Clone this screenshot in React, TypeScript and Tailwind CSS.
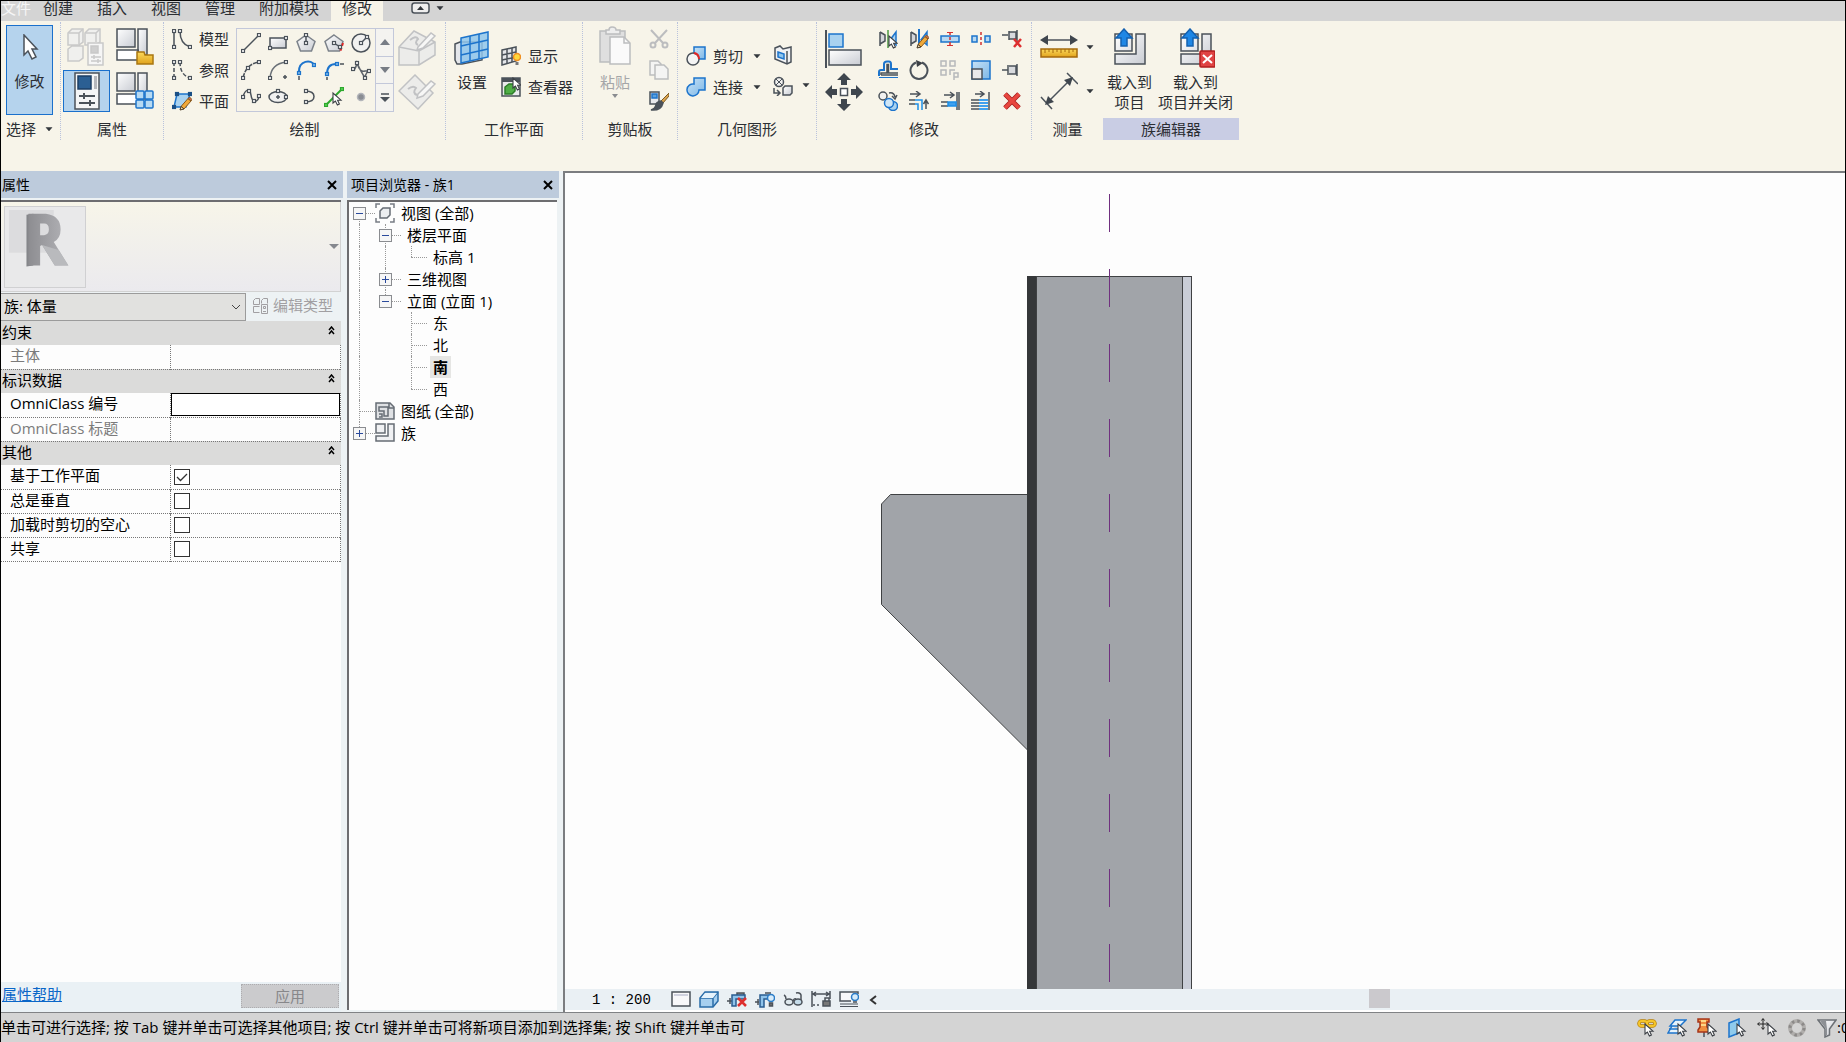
import type { ReactNode } from "react";

interface IconProps {
    w?: number;
    h?: number;
    children: ReactNode;
}

function Icon({ w = 20, h = 20, children }: IconProps) {
    return <svg width={w} height={h} viewBox={`0 0 ${w} ${h}`} fill="none" stroke="#4b525a" strokeWidth="1.5" className="block shrink-0" aria-hidden="true">{children}</svg>
}

function Defs() {
    return <svg width="0" height="0" className="absolute" aria-hidden="true">
        <defs>
            <linearGradient id="gray" x1="0" y1="0" x2="1" y2="1"><stop offset="0" stopColor="#fff" /><stop offset="1" stopColor="#c9ccd3" /></linearGradient>
            <linearGradient id="blue" x1="0" y1="0" x2="1" y2="1"><stop offset="0" stopColor="#c8e2f6" /><stop offset="1" stopColor="#7db7e6" /></linearGradient>
            <linearGradient id="gold" x1="0" y1="0" x2="0" y2="1"><stop offset="0" stopColor="#fbd95c" /><stop offset="1" stopColor="#e0a21c" /></linearGradient>
            <linearGradient id="metal" x1="0" y1="0" x2="1" y2="0"><stop offset="0" stopColor="#8d8d91" /><stop offset="1" stopColor="#b4b4b8" /></linearGradient>
        </defs>
    </svg>
}

/* small square handles used by the sketch tools */
function Dots({ at, color = "#4b525a", fill = "#fff" }: { at: [number, number][]; color?: string; fill?: string }) {
    return <>{at.map(([x, y]) => <rect key={x + "-" + y} x={x - 1.5} y={y - 1.5} width="3" height="3" fill={fill} stroke={color} strokeWidth="1.2" />)}</>
}

function Pointer({ x, y }: { x: number; y: number }) {
    return <path transform={`translate(${x} ${y})`} d="M0 0V10L2.4 8L4.4 12L6.4 11L4.6 7.2H8Z" fill="#fff" stroke="#3c4046" strokeWidth="1.1" />
}

function Pencil() {
    return <g strokeWidth="1">
        <path d="M9 15.500L16 7.500L19 10L12 18Z" fill="#f0a93a" stroke="#8a5a1c" />
        <path d="M16 7.500L17.500 6L20 8.500L19 10Z" fill="#c96a55" stroke="#8a5a1c" />
        <path d="M9 15.500L8 19L12 18Z" fill="#f6dfb0" stroke="#4b3a22" />
    </g>
}

function Down({ className = "" }: { className?: string }) {
    return <svg width="8" height="5" viewBox="0 0 8 5" className={className} aria-hidden="true"><path d="M1 0.500H7L4 4Z" fill="#33373c" stroke="#33373c" strokeWidth="0.500" /></svg>
}

const drawTools: { name: string; icon: ReactNode }[] = [
    { name: "直线", icon: <><path d="M2 18L18 2" /><Dots at={[[2, 18], [18, 2]]} /></> },
    { name: "矩形", icon: <><rect x="2" y="5" width="16" height="10" fill="url(#gray)" /><Dots at={[[2, 15], [18, 5]]} /></> },
    { name: "内接多边形", icon: <><path d="M10 2L19 8.500L15.500 18H4.500L1 8.500Z" fill="url(#gray)" stroke="#7c828a" /><path d="M10 2V10" /><Dots at={[[10, 2], [10, 10]]} /></> },
    { name: "外接多边形", icon: <><path d="M10 2L19 8.500L15.500 18H4.500L1 8.500Z" fill="url(#gray)" stroke="#7c828a" /><path d="M10 10L16 14" /><path d="M19 10L16 19" stroke="#e02626" strokeDasharray="3 2" strokeWidth="2" /><Dots at={[[10, 10], [16, 14]]} /></> },
    { name: "圆形", icon: <><circle cx="10" cy="10" r="9" fill="#f1f1f0" /><path d="M10 10L16 4" /><Dots at={[[10, 10], [16, 4]]} /></> },
    { name: "起点-终点-半径弧", icon: <><path d="M2 18Q5 4 18 2" strokeDasharray="5 1" /><Dots at={[[2, 18], [7, 8], [18, 2]]} /></> },
    { name: "圆心-端点弧", icon: <><path d="M2 18Q3 4 18 2" stroke="#6b7178" /><Dots at={[[2, 18], [18, 2]]} /><path d="M17 15V19M15 17H19" /></> },
    { name: "相切-端点弧", icon: <><path d="M3 13C2 0 16 -1 18 5" stroke="#1d74cc" strokeWidth="2" /><Dots at={[[3, 13], [18, 5]]} color="#1d74cc" fill="#7db7e6" /><path d="M3 16V20" /></> },
    { name: "圆角弧", icon: <><path d="M3 14C3 7 6 4 12 4" stroke="#1d74cc" strokeWidth="2" /><Dots at={[[3, 14], [13, 4]]} color="#1d74cc" fill="#7db7e6" /><path d="M16 4H20M3 17V20" /></> },
    { name: "样条曲线", icon: <><path d="M1 9Q4 12 6 3Q9 13 14 11L19 11M14 18Q15 11 19 11M6 3Q9 10 14 18" stroke="#5e646c" /><Dots at={[[2, 9], [6, 3], [14, 18], [18, 11]]} /></> },
    { name: "样条", icon: <><path d="M2 10C4 2 9 1 10 8C11 16 17 16 18 9" /><Dots at={[[2, 10], [8, 4], [13, 14], [18, 9]]} /></> },
    { name: "椭圆", icon: <><ellipse cx="10" cy="10" rx="9" ry="5.500" fill="#f1f1f0" /><Dots at={[[10, 4], [18, 10]]} /><path d="M10 8V12M8 10H12" /></> },
    { name: "半椭圆", icon: <><path d="M9 4Q18 4 18 9.500Q18 15 9 15" /><Dots at={[[10, 4], [10, 15]]} /></> },
    { name: "拾取线", icon: <><path d="M1 19L19 1" stroke="#2da82d" strokeWidth="2" /><Dots at={[[2, 18], [18, 2]]} color="#2da82d" fill="#58d058" /><Pointer x={9} y={6} /></> },
    { name: "点图元", icon: <><circle cx="10" cy="10" r="3.500" fill="#8a8d93" stroke="#b3b5ba" /></> },
];

const modifyTools: { name: string; icon: ReactNode }[] = [
    { name: "镜像-拾取轴", icon: <><path d="M2 3V17M2 3L7 6V12L2 15" fill="#d4d6da" /><path d="M10 1V19" stroke="#4d9b3f" /><path d="M18 3V16L12 11Z" fill="#a9d2f0" stroke="#1d74cc" /><Pointer x={11} y={7} /></> },
    { name: "镜像-绘制轴", icon: <><path d="M2 3V17M2 3L7 6V12L2 15" fill="#d4d6da" /><path d="M10 0V19" stroke="#1d74cc" strokeWidth="2" /><path d="M18 3V16L12 11Z" fill="#a9d2f0" stroke="#1d74cc" /><Pencil /></> },
    { name: "拆分图元", icon: <><path d="M1 7H19V13H1Z" fill="#b9d9f2" stroke="#1d74cc" /><path d="M10 3V17" stroke="#d43030" strokeDasharray="3 2" /><path d="M7 3.500H13M7 16.500H13" stroke="#d43030" strokeWidth="1" /></> },
    { name: "用间隙拆分", icon: <><rect x="1" y="7" width="5" height="6" fill="#b9d9f2" stroke="#1d74cc" /><rect x="14" y="7" width="5" height="6" fill="#b9d9f2" stroke="#1d74cc" /><path d="M10 3V17" stroke="#d43030" strokeDasharray="3 2" /></> },
    { name: "解锁", icon: <><path d="M0 6H6M7 2V11M7 3H14V10H7M15 1V12" fill="#d8dade" /><path d="M12 10L19 18M19 10L12 18" stroke="#dd2f2f" strokeWidth="2.500" /></> },
    { name: "偏移", icon: <><path d="M1 16V12Q1 10 3 10H6V4Q6 1.500 9 1.500H11Q13 1.500 13 4V9H20" stroke="#1d74cc" strokeWidth="2" /><path d="M1 17.500H20" stroke="#1d74cc" strokeWidth="1" /><path d="M3 15V13H9V4.500H10.500V13H20M3 15H20" /></> },
    { name: "旋转", icon: <><path d="M7 2.500A8.500 8.500 0 1 0 13 2.500" strokeWidth="2" /><path d="M7 0L14 3L8 7Z" fill="#3c4046" stroke="none" /></> },
    { name: "阵列", icon: <g stroke="#b7b8bb"><rect x="1" y="1" width="5" height="5" /><rect x="10" y="1" width="5" height="5" /><rect x="1" y="10" width="5" height="5" /><path d="M10 15V10H15M14 20V13H18V17H14" /></g> },
    { name: "缩放", icon: <><rect x="1" y="1" width="18" height="18" fill="url(#blue)" stroke="#1d74cc" /><rect x="1" y="9" width="10" height="10" fill="#e8e9ec" /></> },
    { name: "锁定", icon: <><path d="M0 10H6M6 5V15M7 6H14V14H7M15 4V16" fill="#d8dade" /></> },
    { name: "复制", icon: <><circle cx="5" cy="5" r="4" fill="#f1f1f0" /><path d="M11 2Q16 1 17 6M14 5L17 8L19 4" /><circle cx="15" cy="15" r="4.500" fill="#a9d2f0" stroke="#1d74cc" /><circle cx="11" cy="12" r="4.500" fill="#cfe6f7" stroke="#1d74cc" /></> },
    { name: "修剪/延伸为角", icon: <><path d="M1 3H10M7 0L11 3L7 6" /><path d="M0 9H6M0 13H6" /><path d="M6 9H13V19M6 13H9V19" stroke="#1d8fe8" strokeWidth="1.500" /><path d="M17 18V10M14.500 13L17 9L19.500 13" /></> },
    { name: "修剪/延伸单个图元", icon: <><path d="M4 4H13M10 1L14 4L10 7M17 1V19M19 1V19" /><path d="M1 11H8M1 15H8" /><rect x="8" y="11" width="8" height="4" fill="#3fa0ee" stroke="#1d8fe8" /></> },
    { name: "修剪/延伸多个图元", icon: <><path d="M4 3H12M9 0L13 3L9 6M18 1V19M0 9H8M0 12H8M0 15H8M0 18H8" /><path d="M8 9H17M8 12H17M8 15H17M8 18H17" stroke="#3fa0ee" strokeWidth="2" /></> },
    { name: "删除", icon: <><path d="M3 3L17 17M17 3L3 17" stroke="#a51e1e" strokeWidth="5" /><path d="M3 3L17 17M17 3L3 17" stroke="#e8473f" strokeWidth="3.500" /></> },
];

const viewControls: { name: string; icon: ReactNode }[] = [
    { name: "详细程度", icon: <><rect x="1" y="2" width="18" height="14" fill="#f8f8fa" /><path d="M3 5H17" stroke="#c3c6d6" /></> },
    { name: "视觉样式", icon: <><path d="M1 8L6 2H19V11L14 17H1Z" fill="#a6cfef" stroke="#2a6ca8" /><path d="M1 8H14V17M14 8L19 2" stroke="#2a6ca8" /><path d="M2 8L6 3H18L14 8Z" fill="#e6f3fc" stroke="none" /></> },
    { name: "关闭裁剪", icon: <><path d="M0 11H5M3 8V14M10 3H17V6H10Z" fill="#999" /><path d="M5 16V5H18V9H9V16Z" fill="#8fc3ea" stroke="#2a5c90" /><path d="M11 8L19 16M19 8L11 16" stroke="#dd2f2f" strokeWidth="2.500" /></> },
    { name: "显示裁剪区域", icon: <><path d="M0 12H4M3 9V15M10 3H16" /><path d="M5 17V5H14V9H9V17Z" fill="#8fc3ea" stroke="#2a5c90" /><circle cx="16" cy="8" r="3.500" fill="#d6ebfa" stroke="#2a7cc8" /><path d="M14.500 13H17.500V16H14.500Z" fill="#777" /></> },
    { name: "临时隐藏/隔离", icon: <><path d="M1 5Q3 6 3 9M10 11Q11 8 13 9M18 10V5Q17 2 13 3" /><ellipse cx="6" cy="12" rx="4" ry="3" fill="#dfe9ee" /><ellipse cx="15" cy="12" rx="4" ry="3" fill="#c5dcea" /></> },
    { name: "显示隐藏的图元", icon: <><path d="M1 1V17M19 1V9M2 4H18M5 2L2 4L5 6M15 2L18 4L15 6" /><path d="M2 15H10" strokeDasharray="2 2" /><rect x="12" y="11" width="7" height="5" fill="#777" /><path d="M14 11V8H18V11" /></> },
    { name: "临时视图属性", icon: <><path d="M19 4V2H1V11H12" fill="#f8f8fa" /><path d="M1 14H19M1 16.500H19" strokeWidth="1" /><circle cx="16" cy="7" r="3.500" fill="#d6ebfa" stroke="#2a7cc8" /><path d="M14 12H18" /></> },
];

const selectToggles: { name: string; icon: ReactNode }[] = [
    { name: "选择链接", icon: <><rect x="2" y="3" width="8" height="5" rx="2.500" stroke="#b67f06" strokeWidth="3.500" /><rect x="10" y="3" width="8" height="5" rx="2.500" stroke="#b67f06" strokeWidth="3.500" /><rect x="2" y="3" width="8" height="5" rx="2.500" stroke="#f5c52a" strokeWidth="2" /><rect x="10" y="3" width="8" height="5" rx="2.500" stroke="#f5c52a" strokeWidth="2" /><Pointer x={8} y={6} /></> },
    { name: "选择基线图元", icon: <><path d="M8 2H19L13 8H3ZM5 8L1 15H15" fill="#e6f3fc" stroke="#1d74cc" /><path d="M2 11H16" stroke="#1d74cc" /><Pointer x={11} y={6} /></> },
    { name: "选择锁定图元", icon: <><path d="M7 13V19" /><path d="M1 1H12V4H10V9L13 12V14H1V12L3 9V4H1Z" fill="#f09040" stroke="#a53418" /><path d="M4 3H9M4 7H9" stroke="#fff0a0" /><Pointer x={11} y={6} /></> },
    { name: "按面选择图元", icon: <><path d="M2 5L12 1V15L2 19Z" fill="#8fcbed" stroke="#1d74cc" /><Pointer x={10} y={6} /></> },
    { name: "选择时拖拽图元", icon: <><path d="M6 1V11M1 6H11M4.500 2.500L6 0.500L7.500 2.500M4.500 9.500L6 11.500L7.500 9.500M2.500 4.500L0.500 6L2.500 7.500M9.500 4.500L11.500 6L9.500 7.500" stroke="#222" strokeWidth="1" /><Pointer x={11} y={6} /></> },
    { name: "后台进程", icon: <><circle cx="10" cy="10" r="7" stroke="#b0aeac" strokeWidth="4" /><circle cx="10" cy="10" r="7" stroke="#8c8a89" strokeWidth="3" strokeDasharray="2.500 3" /></> },
    { name: "过滤器", icon: <><path d="M1 2H19L12.500 11V17L8 19V11Z" fill="url(#gray)" stroke="#6c7075" /><path d="M3 3H9L10 11V17H9V11Z" fill="#8d9095" stroke="none" /></> },
];

function IconButton({ name, children }: { name: string; children: ReactNode }) {
    return <button type="button" aria-label={name} className="flex items-center justify-center">{children}</button>
}

function Panel({ title, last, className = "", children }: { title: ReactNode; last?: boolean; className?: string; children: ReactNode }) {
    return <section className={"flex flex-col " + (last ? "" : "border-r border-dotted border-[#b9c2dc] ") + className}>
        <div className="flex h-24 items-center">{children}</div>
        <div className={"flex h-[22px] items-center justify-center " + (last ? "bg-[#c9cde4]" : "")}>{title}</div>
    </section>
}

/* stack of blocks, the base of all family icons */
function Blocks() {
    return <g fill="url(#gray)"><path d="M1 1H19V19H1Z" /><path d="M22 1H31V27H22Z" /><path d="M1 22H22V32H1Z" fill="#fff" /></g>
}

function LoadIcon({ close }: { close?: boolean }) {
    return <Icon w={38} h={40}>
        <path d="M4 6H21V23H4ZM25 6H34V36H4V26H25Z" fill="url(#gray)" />
        <path d="M13 1L21 10H16V18H10V10H5Z" fill="#1f87e5" stroke="#1461b0" />
        {close && <><rect x="23" y="23" width="15" height="16" rx="1" fill="#e04343" stroke="#b01f1f" /><path d="M26 27L35 35M35 27L26 35" stroke="#fff" strokeWidth="2" /></>}
    </Icon>
}

function Ribbon() {
    return <div className="flex h-[150px] items-start bg-[#f7f4e9] pt-px whitespace-nowrap">
        <Panel className="w-[60px]" title={<button type="button" className="flex w-full items-center gap-[9px] pl-[5px]">选择<Down /></button>}>
            <button type="button" className="ml-[5px] flex h-[90px] w-[47px] flex-col items-center border border-[#1a70cc] bg-[#b5d3ed] pt-2">
                <Icon w={18} h={26}><path d="M3 1V21L7 17L11 25L15 23L11 15H16Z" fill="#fff" /></Icon>
                <span className="mt-2.5">修改</span>
            </button>
        </Panel>
        <Panel className="w-[103px]" title="属性">
            <div className="grid flex-1 grid-cols-2 gap-y-1 pr-1">
                <IconButton name="族类别和族参数">
                    <Icon w={38} h={38}>
                        <g stroke="#c9c9c9" fill="#f0f0ee"><path d="M1 5L5 1H16V14L12 17H1ZM18 5L22 1H33V14L29 17H18ZM1 21L5 18H16V30L12 33H1Z" /><path d="M1 5H12V17M12 5L16 1M18 5H29V14M29 5L33 1" /><path d="M21 15H36V37H21Z" fill="#f6f6f6" /><path d="M24 18H31V25H24Z" fill="#cfcfcf" /><path d="M24 29H34M24 33H34M27 27V31M31 31V35" /></g>
                    </Icon>
                </IconButton>
                <IconButton name="族类型">
                    <Icon w={38} h={38}><Blocks /><path d="M21 25V36H37V27H29L28 24H21Z" fill="url(#gold)" stroke="#a97712" /></Icon>
                </IconButton>
                <button type="button" aria-label="属性" className="ml-0.5 flex h-[42px] w-[47px] items-center justify-center border border-[#1a70cc] bg-[#b5d3ed]">
                    <Icon w={28} h={38}><path d="M2 1H26V37H2Z" fill="#f4f5f6" /><path d="M5 4H18V17H5Z" fill="#2b5f93" stroke="#1c3f66" /><path d="M21 4H24V17H21Z" fill="#b5b7bc" stroke="none" /><path d="M6 24H22M6 31H22M11 21V27M17 28V34" strokeWidth="2" /></Icon>
                </button>
                <IconButton name="类型属性">
                    <Icon w={38} h={38}><Blocks /><g fill="#b7daf3" stroke="#1d74cc"><rect x="20" y="19" width="8" height="8" rx="1" /><rect x="29" y="19" width="8" height="8" rx="1" /><rect x="20" y="28" width="8" height="8" rx="1" /><rect x="29" y="28" width="8" height="8" rx="1" /></g></Icon>
                </IconButton>
            </div>
        </Panel>
        <Panel className="w-[282px]" title="绘制">
            <div className="ml-2 flex flex-col">
                <button type="button" className="flex h-[31px] items-center gap-[7px]"><Icon><path d="M2 2V18M8 2Q8 15 18 18" /><Dots at={[[2, 2], [2, 18], [8, 2], [18, 18]]} /></Icon>模型</button>
                <button type="button" className="flex h-[31px] items-center gap-[7px]"><Icon><path d="M2 2V18M8 2Q8 15 18 18" strokeDasharray="4 2" /><Dots at={[[2, 2], [2, 18], [8, 2], [18, 18]]} /></Icon>参照</button>
                <button type="button" className="flex h-[31px] items-center gap-[7px]"><Icon><path d="M5 3H18L14 16H2Z" fill="#a9d2f0" stroke="#1d74cc" /><Dots at={[[5, 3], [18, 3], [2, 16]]} color="#1b4f85" fill="#1b4f85" /><Pencil /></Icon>平面</button>
            </div>
            <div className="ml-[7px] flex h-[84px] w-[158px] border border-[#c3c8da]">
                <div className="grid flex-1 grid-cols-5">
                    {drawTools.map((t) => <IconButton key={t.name} name={t.name}><Icon>{t.icon}</Icon></IconButton>)}
                </div>
                <div className="flex w-[18px] flex-col divide-y divide-[#c3c8da] border-l border-[#c3c8da] bg-[#f4f3f0]">
                    <button type="button" aria-label="上一行" className="flex flex-1 items-center justify-center"><Icon w={10} h={6}><path d="M0 6L5 0L10 6Z" fill="#777c85" stroke="none" /></Icon></button>
                    <button type="button" aria-label="下一行" className="flex flex-1 items-center justify-center"><Icon w={10} h={6}><path d="M0 0L5 6L10 0Z" fill="#777c85" stroke="none" /></Icon></button>
                    <button type="button" aria-label="更多" className="flex flex-1 items-center justify-center"><Icon w={10} h={10}><path d="M1 1H9" /><path d="M0 4L5 9L10 4Z" fill="#4b525a" stroke="none" /></Icon></button>
                </div>
            </div>
            <div className="ml-1 flex flex-col gap-2">
                <IconButton name="在面上绘制"><Icon w={38} h={36}><g stroke="#c1c2c4" fill="#ececea"><path d="M1 17L16 1L37 12V25L21 35H1Z" /><path d="M1 17L21 21L37 12M21 21V35" /><path d="M12 10Q18 5 20 9Q16 13 20 15" fill="none" strokeWidth="2" /><path d="M20 17L33 3L37 6L25 18L19 20Z" fill="#f7f7f6" /></g></Icon></IconButton>
                <IconButton name="在工作平面上绘制"><Icon w={38} h={36}><g stroke="#c1c2c4" fill="#ececea"><path d="M1 17L17 1L35 19L20 35Z" /><path d="M10 15Q15 11 18 14Q14 19 19 21" fill="none" strokeWidth="2" /><path d="M20 20L33 7L37 10L25 22L19 24Z" fill="#f7f7f6" /></g></Icon></IconButton>
            </div>
        </Panel>
        <Panel className="w-[137px]" title="工作平面">
            <button type="button" className="ml-2 flex flex-col items-center self-start pt-2 leading-5"><Icon w={36} h={36}><path d="M1 14L6 12H28V30L8 34H3L1 30Z" fill="#e4e6ea" /><path d="M7 8L34 2V27L7 33Z" fill="#8fc5ec" fillOpacity="0.850" stroke="#1d74cc" /><path d="M16 6V31M25 4V29M7 16L34 10M7 25L34 19" stroke="#1d74cc" /></Icon><span className="mt-1.5">设置</span></button>
            <div className="ml-[11px] flex flex-col pt-[3px]">
                <button type="button" className="flex h-[31px] items-center gap-[7px]"><Icon><path d="M1 4L15 1V15L1 19Z" fill="#e4e6ea" /><path d="M6 3V18M11 2V16M1 9L15 6M1 14L15 11" /><circle cx="16" cy="11" r="3.500" fill="#ffd83c" stroke="#f09022" /><path d="M14.500 16H17.500V19H14.500Z" fill="#777" stroke="none" /></Icon>显示</button>
                <button type="button" className="flex h-[31px] items-center gap-[7px]"><Icon><rect x="1" y="1" width="18" height="18" fill="#e9eaec" /><path d="M1 3H19" strokeWidth="4" /><path d="M4 10L8 7H14V14L11 17H4Z" fill="#4fae45" stroke="#2c7d28" /><Pointer x={12} y={1} /></Icon>查看器</button>
            </div>
        </Panel>
        <Panel className="w-[95px]" title="剪贴板">
            <button type="button" className="ml-4 flex flex-col items-center self-start pt-1 leading-5 text-[#a5a6a8]">
                <Icon w={32} h={40}><g stroke="#bcbdbf"><path d="M1 5H26V36H1Z" fill="#dfdfdf" /><path d="M7 8V4H10Q10 1 13 1Q17 1 17 4H21V8Z" fill="#eee" /><path d="M11 11H25L31 17V38H11Z" fill="#fafafa" /><path d="M25 11V17H31" /></g></Icon>
                <span className="mt-1.5">粘贴</span>
                <svg width="8" height="5" viewBox="0 0 8 5" className="mt-0.5"><path d="M1 0H7L4 4Z" fill="#8a8c90" /></svg>
            </button>
            <div className="ml-[18px] flex flex-col">
                <span className="flex h-[31px] items-center"><IconButton name="剪切"><Icon><g stroke="#bcbdbf" strokeWidth="2"><path d="M2 1L14 14M18 1L6 14" /><circle cx="4" cy="16" r="2.500" /><circle cx="16" cy="16" r="2.500" /></g></Icon></IconButton></span>
                <span className="flex h-[31px] items-center"><IconButton name="复制到剪贴板"><Icon><g stroke="#bcbdbf" fill="#f4f4f3"><path d="M1 1H9L12 4V15H1Z" /><path d="M6 5H15L19 9V19H6Z" /></g></Icon></IconButton></span>
                <span className="flex h-[31px] items-center"><IconButton name="匹配类型属性"><Icon><rect x="1" y="1" width="9" height="12" fill="#e8e9ec" /><rect x="3" y="3" width="5" height="4" fill="#5b9fdc" stroke="#1d74cc" /><path d="M20 2L12 10L14 12L20 5Z" fill="#dca24c" stroke="#7a5a22" strokeWidth="1" /><path d="M12 10Q7 11 7 14Q6 18 2 19Q12 20 14 12Z" fill="#4b525a" /></Icon></IconButton></span>
            </div>
        </Panel>
        <Panel className="w-[139px]" title="几何图形">
            <div className="ml-2 flex flex-col pt-[3px]">
                <button type="button" className="flex h-[31px] items-center gap-[7px]"><Icon><rect x="8" y="1" width="11" height="12" fill="url(#blue)" stroke="#1d74cc" /><circle cx="7" cy="13" r="6" fill="#f4f4f4" /><path d="M8 7Q13 8 13 13" stroke="#e02626" strokeWidth="2" /></Icon>剪切<Down className="ml-[3px]" /></button>
                <button type="button" className="flex h-[31px] items-center gap-[7px]"><Icon><path d="M8 1H19V13H13A6 6 0 1 1 8 7Z" fill="url(#blue)" stroke="#1d74cc" /></Icon>连接<Down className="ml-[3px]" /></button>
            </div>
            <div className="ml-3 flex flex-col">
                <span className="flex h-[31px] items-center"><IconButton name="洞口"><Icon><path d="M2 3L7 1L10 4L18 2V17L14 19L2 14Z" fill="#f0f1f3" /><path d="M5 7L11 9V14L5 12Z" fill="#8fc5ec" stroke="#1d74cc" /><path d="M14 6V19" /></Icon></IconButton></span>
                <button type="button" aria-label="连接端切割" className="flex h-[31px] items-center gap-[9px]"><Icon><circle cx="6" cy="6" r="4.500" fill="#f1f1f0" /><path d="M3 3L9 9M9 3L3 9" strokeWidth="1" /><path d="M1 12V17H6M4 14L7 17L4 20" /><path d="M10 12L12 10H19V17L17 19H10Z" fill="url(#gray)" /></Icon><Down /></button>
            </div>
        </Panel>
        <Panel className="w-[215px]" title="修改">
            <div className="ml-2 flex flex-col gap-1">
                <IconButton name="对齐"><Icon w={38} h={40}><path d="M1 1V39" strokeWidth="2" /><rect x="4" y="5" width="14" height="13" fill="#a9d2f0" stroke="#1d74cc" /><rect x="4" y="21" width="32" height="15" fill="url(#gray)" /></Icon></IconButton>
                <IconButton name="移动"><Icon w={38} h={38}><path d="M19 0L26 7H22V12H16V7H12ZM19 38L26 31H22V26H16V31H12ZM0 19L7 12V16H12V22H7V26ZM38 19L31 12V16H26V22H31V26Z" fill="#3f464e" stroke="none" /><rect x="15.500" y="15.500" width="7" height="7" fill="#fff" /></Icon></IconButton>
            </div>
            <div className="ml-[9px] mr-1 grid flex-1 grid-cols-5">
                {modifyTools.map((t) => <span key={t.name} className="flex h-[31px] items-center justify-center"><IconButton name={t.name}><Icon>{t.icon}</Icon></IconButton></span>)}
            </div>
        </Panel>
        <div className="flex flex-1">
            <Panel className="w-[71px] border-r-0" title="测量">
                <div className="ml-2 flex flex-col gap-3 pt-1">
                    <button type="button" aria-label="测量距离" className="flex items-center gap-2"><Icon w={38} h={26}><path d="M3 6H35" /><path d="M0 6L8 1V11ZM38 6L30 1V11Z" fill="#3f464e" stroke="none" /><rect x="1" y="15" width="36" height="8" fill="url(#gold)" stroke="#a4690d" /><path d="M5 15V19M9 15V18M13 15V19M17 15V18M21 15V19M25 15V18M29 15V19M33 15V18" stroke="#a4690d" strokeWidth="1" /></Icon><Down /></button>
                    <button type="button" aria-label="尺寸标注" className="flex items-center gap-2"><Icon w={38} h={38}><path d="M7 31L31 7M1 25L12 37M27 1L38 12" /><path d="M5 33L8 24L14 30ZM33 5L24 8L30 14Z" fill="#3f464e" stroke="none" /></Icon><Down /></button>
                </div>
            </Panel>
            <Panel last className="w-[136px]" title="族编辑器">
                <button type="button" className="ml-1 flex flex-col items-center gap-1 leading-5"><LoadIcon /><span>载入到<br />项目</span></button>
                <button type="button" className="ml-1.5 flex flex-col items-center gap-1 leading-5"><LoadIcon close /><span>载入到<br />项目并关闭</span></button>
            </Panel>
        </div>
    </div>
}

function TitleBar({ title }: { title: string }) {
    return <div className="flex h-[27px] items-center justify-between bg-[#bdcbdc] pr-1.5 pl-px text-sm">
        <h2>{title}</h2>
        <button type="button" aria-label="关闭"><Icon w={10} h={10}><path d="M1 1L9 9M9 1L1 9" stroke="#000" strokeWidth="2" /></Icon></button>
    </div>
}

interface Field {
    id: string;
    label: string;
    kind: "none" | "text" | "check";
    checked?: boolean;
}

const groups: { name: string; fields: Field[] }[] = [
    { name: "约束", fields: [{ id: "host", label: "主体", kind: "none" }] },
    { name: "标识数据", fields: [{ id: "omni-no", label: "OmniClass 编号", kind: "text" }, { id: "omni-title", label: "OmniClass 标题", kind: "none" }] },
    {
        name: "其他", fields: [
            { id: "plane", label: "基于工作平面", kind: "check", checked: true },
            { id: "vertical", label: "总是垂直", kind: "check" },
            { id: "void", label: "加载时剪切的空心", kind: "check" },
            { id: "shared", label: "共享", kind: "check" },
        ]
    },
];

function FieldInput({ field }: { field: Field }) {
    if (field.kind === "text") {
        return <input id={field.id} className="block h-[23px] w-full border border-black bg-white px-1 outline-none" />
    }
    if (field.kind === "check") {
        return <div className="relative ml-[3px] size-4">
            <input id={field.id} type="checkbox" defaultChecked={field.checked} className="peer block size-4 appearance-none border border-[#333] bg-white" />
            <svg viewBox="0 0 16 16" className="pointer-events-none absolute inset-0 hidden peer-checked:block"><path d="M3 8L6.500 11.500L13 5" fill="none" stroke="#333" strokeWidth="1.300" /></svg>
        </div>
    }
    return null;
}

function PropertyTable() {
    return <table className="w-full table-fixed border-collapse">
        <colgroup><col className="w-1/2" /><col className="w-1/2" /></colgroup>
        {groups.map((g) => <tbody key={g.name}>
            <tr className="h-6 bg-[#dbdbda]">
                <th colSpan={2} className="p-0 pr-1.5 pb-0.5 pl-px text-left font-normal">
                    <div className="flex items-center justify-between leading-5">{g.name}
                        <button type="button" aria-label={"折叠" + g.name} className="-mt-1"><Icon w={7} h={9}><path d="M1 4L3.500 1L6 4M1 8L3.500 5L6 8" stroke="#000" /></Icon></button>
                    </div>
                </th>
            </tr>
            {g.fields.map((f) => <tr key={f.id} className="h-6 border-b border-dotted border-[#777]">
                <td className={"border-r border-dotted border-[#777] p-0 pb-[3px] pl-[9px] leading-5 " + (f.kind === "none" ? "text-[#7b7b7b]" : "")}>
                    {f.kind === "none" ? f.label : <label htmlFor={f.id}>{f.label}</label>}
                </td>
                <td className="border-r border-dotted border-[#777] p-0"><FieldInput field={f} /></td>
            </tr>)}
        </tbody>)}
    </table>
}

function Properties() {
    return <aside className="flex w-[342px] shrink-0 flex-col bg-[#edf2f4]">
        <TitleBar title="属性" />
        <div className="mt-0.5 mr-0.5 flex flex-1 flex-col border-t-2 border-[#6d6d70] bg-[#fdfdfd]">
            <div className="flex h-[90px] items-center justify-between border-r border-b border-[#d2d2d2] bg-linear-to-b from-[#f7f5e9] to-[#ebeaee] pr-px pl-[3px]">
                <svg width="82" height="82" viewBox="0 0 82 82" className="border border-[#d0d0d2] bg-[#e9e9ea]" aria-hidden="true">
                    <path d="M4 3H50V47H4Z" fill="#dcdcde" />
                    <path d="M22 8L29 7V60L22 61Z" fill="#85868a" />
                    <path fillRule="evenodd" d="M24 7H42Q57 9 57 23Q57 32 50 36L65 60H51L38 39L36 40V60H24ZM36 17V29H40Q45 28 45 23Q45 17 40 17Z" fill="url(#metal)" />
                    <path d="M38 39L51 60H65L55 44Z" fill="#b9babd" />
                </svg>
                <button type="button" aria-label="类型选择器"><Icon w={10} h={5}><path d="M0 0H10L5 5Z" fill="#85888e" stroke="none" /></Icon></button>
            </div>
            <div className="flex h-[29px] items-center bg-[#edf2f4]">
                <div className="relative">
                    <select aria-label="族" className="block h-7 w-[245px] appearance-none border border-l-0 border-[#9b9b9b] bg-[#e1e1df] pl-[3px] outline-none"><option>族: 体量</option></select>
                    <svg width="10" height="6" viewBox="0 0 10 6" className="pointer-events-none absolute top-[11px] right-[5px]"><path d="M1 1L5 5L9 1" fill="none" stroke="#444" /></svg>
                </div>
                <button type="button" disabled className="ml-1.5 flex items-center gap-[5px] pb-[3px] leading-5 text-[#a19fa2]">
                    <Icon w={16} h={17}><g stroke="#a19fa2" strokeWidth="1"><path d="M1.500 3.500L3.500 1.500H7.500V7.500H1.500ZM9.500 6.500V3.500L11.500 1.500H15.500V6.500M7.500 9.500H1.500V15.500H7.500" /><path d="M9.500 7.500H15.500V16.500H9.500ZM11.500 9.500H13.500V11.500H11.500ZM11 14.500H14" /></g></Icon>
                    编辑类型
                </button>
            </div>
            <PropertyTable />
            <div className="mt-auto flex h-[30px] items-center justify-between bg-[#eaf1f5] pr-0.5 pb-0.5 pl-px">
                <a href="#help" className="self-start leading-[25px] text-[#0a66c8] underline">属性帮助</a>
                <button type="button" disabled className="h-6 w-[98px] border border-dotted border-[#adadb0] bg-[#cbcbcd] leading-5 text-[#87878a]">应用</button>
            </div>
        </div>
    </aside>
}

type Gutter = "blank" | "line" | "branch" | "end" | "open" | "closed";

/* one indent step of the tree: vertical guide, elbow and optional expander */
function TreeGutter({ kind, first, last }: { kind: Gutter; first?: boolean; last?: boolean }) {
    const box = kind === "open" || kind === "closed";
    return <span className="relative h-full w-[26px] shrink-0">
        {kind !== "blank" && <span className={"absolute left-[10px] border-l border-dotted border-[#999] " + (first ? "top-1/2 bottom-0" : kind === "end" || last ? "top-0 bottom-1/2" : "top-0 bottom-0")} />}
        {kind !== "blank" && kind !== "line" && <span className="absolute top-1/2 right-0 left-[10px] border-t border-dotted border-[#999]" />}
        {box && <button type="button" aria-label={kind === "open" ? "折叠" : "展开"} className="absolute top-[5px] left-1 bg-white">
            <Icon w={13} h={13}><rect x="0.500" y="0.500" width="12" height="12" fill="#f6f6f6" stroke="#8a8c90" strokeWidth="1" /><path d={kind === "open" ? "M3 6.500H10" : "M3 6.500H10M6.500 3V10"} stroke="#2a4a9c" strokeWidth="1" /></Icon>
        </button>}
    </span>
}

const tree: { text: string; gutters: Gutter[]; icon?: ReactNode; first?: boolean; last?: boolean; selected?: boolean }[] = [
    { text: "视图 (全部)", gutters: ["open"], first: true, icon: <Icon><path d="M5 1H1V5M15 1H19V5M1 15V19H5M19 15V19H15" stroke="#777c84" /><path d="M5 8L8 5H15V12L12 15H5Z" fill="#eceef0" stroke="#666c74" /></Icon> },
    { text: "楼层平面", gutters: ["line", "open"] },
    { text: "标高 1", gutters: ["line", "line", "end"] },
    { text: "三维视图", gutters: ["line", "closed"] },
    { text: "立面 (立面 1)", gutters: ["line", "open"], last: true },
    { text: "东", gutters: ["line", "blank", "branch"] },
    { text: "北", gutters: ["line", "blank", "branch"] },
    { text: "南", gutters: ["line", "blank", "branch"], selected: true },
    { text: "西", gutters: ["line", "blank", "end"] },
    { text: "图纸 (全部)", gutters: ["branch"], icon: <Icon><path d="M1 2H15L19 6V18H1Z" fill="#dfe1e4" stroke="#666c74" /><path d="M4 6H13V15H9V10H4ZM14 2V7H19M4 13H7V16H4" stroke="#666c74" /></Icon> },
    { text: "族", gutters: ["closed"], last: true, icon: <Icon><path d="M1 1H10V10H1ZM13 1H19V18H1V13H13Z" fill="#f0f1f3" stroke="#666c74" /></Icon> },
];

function ProjectBrowser() {
    return <aside className="ml-1 flex w-[212px] shrink-0 flex-col bg-[#edf2f4]">
        <div className="bg-[#bdcbdc] pl-[3px]"><TitleBar title="项目浏览器 - 族1" /></div>
        <div className="mt-0.5 mr-0.5 mb-0.5 flex-1 border-t-2 border-l-2 border-[#6d6d70] bg-[#fdfdfd]">
            <ul>
                {tree.map((n) => <li key={n.text} className="flex h-[22px] items-center">
                    {n.gutters.map((g, i) => <TreeGutter key={i} kind={g} first={n.first} last={n.last && i === n.gutters.length - 1} />)}
                    {n.icon}
                    <span className={"leading-[22px] " + (n.selected ? "ml-[3px] bg-[#e6e6e4] px-[3px] font-bold" : "ml-1.5")}>{n.text}</span>
                </li>)}
            </ul>
        </div>
    </aside>
}

function ModelView() {
    return <main className="ml-1 flex min-w-0 flex-1 flex-col border-t-2 border-l-2 border-[#7b7d80] bg-[#fdfdfd]">
        <svg className="block min-h-0 w-full flex-1" aria-label="立面: 南">
            <path d="M316.500 331V431.500L462.500 577V321.500H325.500Z" fill="#a1a4a9" stroke="#3f4143" />
            <rect x="462" y="103" width="10" height="1200" fill="#353739" />
            <rect x="471.500" y="103.500" width="146" height="1200" fill="#a1a4a9" stroke="#3f4143" />
            <rect x="617.500" y="103.500" width="9" height="1200" fill="#c9cdd7" stroke="#3f4143" />
            <path d="M544.500 21V820" stroke="#70307f" strokeDasharray="38 37" />
        </svg>
        <div className="flex h-[23px] items-center gap-2 border-b-2 border-white bg-[#eaf0f4]">
            <span className="mr-3 ml-[27px] font-['Liberation_Mono',monospace] text-sm">1 : 200</span>
            {viewControls.map((v) => <IconButton key={v.name} name={v.name}><Icon>{v.icon}</Icon></IconButton>)}
            <IconButton name="收起"><Icon w={20} h={10}><path d="M9 1L4 5L9 9" stroke="#333" strokeWidth="2" /></Icon></IconButton>
            <div className="flex h-full flex-1 items-start">
                <div className="grow-[51]" /><div className="h-[19px] w-[21px] bg-[#cbc9cd]" /><div className="grow-[49]" />
            </div>
        </div>
    </main>
}

const tabs = ["创建", "插入", "视图", "管理", "附加模块"];

export default function App() {
    return <div className="flex min-h-screen flex-col overflow-hidden border-x border-t border-black bg-[#edf2f4] text-[15px] text-[#2b2e33] [font-family:'Open_Sans','Noto_Sans_CJK_SC',sans-serif]">
        <Defs />
        <nav className="flex h-5 bg-[#d4d4d4] leading-[14px]">
            <button type="button" className="pb-1.5 text-[#f6f6f6]">文件</button>
            {tabs.map((t) => <button type="button" key={t} className="px-3 pb-1.5">{t}</button>)}
            <button type="button" className="bg-[#f7f4e9] px-[11px] pb-1.5">修改</button>
            <button type="button" aria-label="最小化功能区" className="ml-7 flex items-center gap-1.5 pb-1.5">
                <Icon w={19} h={12}><rect x="1" y="1" width="17" height="10" rx="2.500" fill="#eee" /><path d="M6 8L9.500 4L13 8Z" fill="#33373c" stroke="none" /></Icon>
                <Down />
            </button>
        </nav>
        <Ribbon />
        <div className="flex flex-1 text-black">
            <Properties />
            <ProjectBrowser />
            <ModelView />
        </div>
        <footer className="flex h-[30px] items-center justify-between border-t border-[#808285] bg-[#d4d4d4] text-black">
            <p className="whitespace-nowrap">单击可进行选择; 按 Tab 键并单击可选择其他项目; 按 Ctrl 键并单击可将新项目添加到选择集; 按 Shift 键并单击可</p>
            <div className="flex items-center gap-2.5">
                {selectToggles.map((s) => <IconButton key={s.name} name={s.name}><Icon>{s.icon}</Icon></IconButton>)}
                <span className="-ml-2.5 w-2 overflow-hidden">:0</span>
            </div>
        </footer>
    </div>
}
